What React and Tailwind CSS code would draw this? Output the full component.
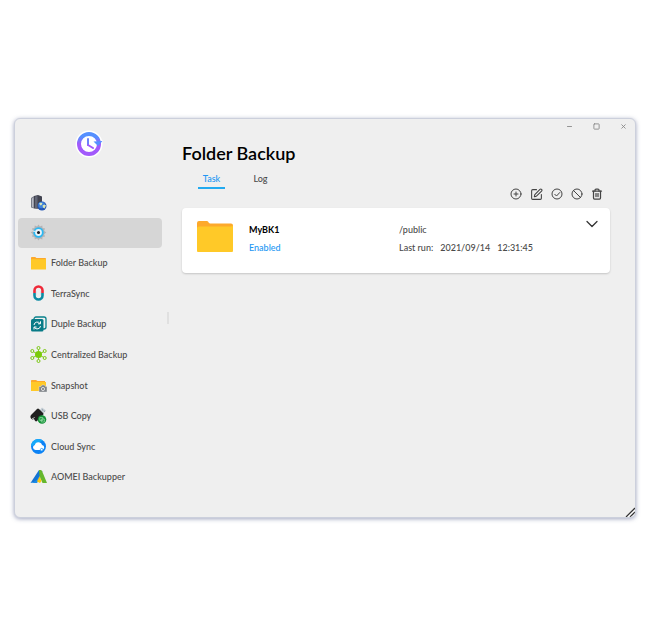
import React, { useState } from 'react';
import { ChevronDown, CirclePlus, Ban, SquarePen, Trash2, Minus, Square, X } from 'lucide-react';

const Logo = () => (
  <svg viewBox="0 0 28 28" className="h-7 w-7" fill="none" aria-label="Backup">
    <defs>
      <linearGradient id="ring" x1="0" y1="0" x2="0" y2="1">
        <stop offset="0.15" stopColor="#5590ff" />
        <stop offset="0.5" stopColor="#a259fb" />
      </linearGradient>
    </defs>
    <circle cx="14" cy="14" r="13.500" fill="#fff" />
    <path d="M20 8l8.500 3-5 6z" fill="#fff" />
    <circle cx="14" cy="14" r="10" stroke="url(#ring)" strokeWidth="4" />
    <path d="M18.500 11.500l9-.6-4.500 5z" fill="#5590ff" />
    <path d="M13 9v6" stroke="#6b83fa" strokeWidth="2" strokeLinecap="round" />
    <path d="M13 15l5 3" stroke="#a259fb" strokeWidth="2" strokeLinecap="round" />
  </svg>
);

const ServerIcon = () => (
  <svg viewBox="0 0 17 17" className="h-[17px] w-[17px]">
    <path d="M1 4l3-2v12.500L1 13.500z" fill="#777b88" />
    <path d="M2 4.500l1.500-1v10L2 13z" fill="#b5b8c2" />
    <path d="M4 2l4-1 4 1.500V15l-8-.5z" fill="#414350" />
    <path d="M5 2.500l2.500-.5v12.500L5 14z" fill="#626676" />
    <circle cx="12" cy="12" r="4.500" fill="#2456b4" />
    <circle cx="11.500" cy="11" r="3.200" fill="#3d82dc" />
    <path d="M9 9.500l2-1 1.500 1-1 1.500-1 .5zM12.500 11.500l2-1 1.500 1-1.500 3-1.500-1z" fill="#dce6b5" />
  </svg>
);

const GearIcon = () => (
  <svg viewBox="0 0 17 17" className="h-[17px] w-[17px]">
    <path
      d="M8.500.5l1.400 2 2.300-1 .4 2.500 2.500.6-1 2.200 2.200 1.700-2.200 1.700 1 2.200-2.500.6-.4 2.500-2.300-1-1.400 2-1.400-2-2.300 1-.4-2.500-2.500-.6 1-2.200L.7 8.500l2.200-1.700-1-2.200 2.500-.6.4-2.500 2.300 1z"
      fill="#b2b3b6"
    />
    <circle cx="8.500" cy="8.500" r="4.300" fill="#eaf4fa" stroke="#2bb8f2" strokeWidth="1.800" />
    <circle cx="8.500" cy="8.500" r="1.500" fill="#171b20" />
    <path d="M2.500 7l3 .5" stroke="#e5e8ea" strokeWidth="1.200" />
  </svg>
);

const FolderIcon = ({ className }) => (
  <svg viewBox="0 0 36 32" className={className} preserveAspectRatio="none">
    <path d="M0 2q0-2 2-2h8q1 0 2 2l1 .5h21q2 0 2 2V14H0z" fill="#fda92b" />
    <path d="M0 7q0-1.500 2-1.500h32q2 0 2-2V30q0 1-1 1H1q-1 0-1-1z" fill="#ffc928" />
  </svg>
);

const TerraIcon = () => (
  <svg viewBox="0 0 17 17" className="h-[17px] w-[17px]" fill="none" strokeWidth="2.600">
    <path d="M4.500 8V5.500a4 4 0 0 1 8 0V8" stroke="#ef2938" />
    <path d="M4.500 8v2.500a4 4 0 0 0 8 0V8" stroke="#0b8ba3" />
    <path d="M6.500 6v4.500M10.500 6v4.500" stroke="#d4e3e7" strokeWidth=".6" />
  </svg>
);

const DupleIcon = () => (
  <svg viewBox="0 0 17 17" className="h-[17px] w-[17px]" fill="none">
    <rect x="4" y="1" width="12" height="12" rx="2" stroke="#08818c" strokeWidth="1.300" />
    <rect x="1" y="3" width="12.500" height="12.500" rx="1.500" fill="#087b87" />
    <path d="M4 9a3.300 3.300 0 0 1 6-1.500M10.500 10a3.300 3.300 0 0 1-6 1.500M10.500 5.300v2.500H8M4 13.500V11h2.500" stroke="#fff" strokeWidth="1" />
  </svg>
);

const CentralIcon = () => (
  <svg viewBox="0 0 17 17" className="h-[17px] w-[17px]" fill="none" stroke="#7bc714">
    <path d="M8.500 3v11M3 5.500l11 6M14 5.500l-11 6" strokeWidth=".9" />
    <circle cx="8.500" cy="8.500" r="3.500" fill="#7bcb0a" stroke="none" />
    <g fill="#efefef" strokeWidth="1">
      <circle cx="8.500" cy="2" r="1.500" />
      <circle cx="8.500" cy="15" r="1.500" />
      <circle cx="2.300" cy="5" r="1.500" />
      <circle cx="14.700" cy="5" r="1.500" />
      <circle cx="2.300" cy="12" r="1.500" />
      <circle cx="14.700" cy="12" r="1.500" />
    </g>
  </svg>
);

const SnapshotIcon = () => (
  <svg viewBox="0 0 17 17" className="h-[17px] w-[17px]">
    <path d="M1 3.500Q1 3 2 3h4l1.500 1H15v4H1z" fill="#fda92b" />
    <path d="M1 5h15v9H1z" fill="#ffc928" />
    <path d="M9 9.500h2l1-1.500h2.500l1 1.500H17V15H9z" fill="#7f8489" stroke="#efefef" strokeWidth=".4" />
    <circle cx="13" cy="12" r="1.600" fill="#7f8489" stroke="#f0f0f0" strokeWidth=".8" />
  </svg>
);

const UsbIcon = () => (
  <svg viewBox="0 0 17 17" className="h-[17px] w-[17px]">
    <path d="M9.500 3.500l2.500-3 4 3-3 3.500z" fill="#c3cdd4" />
    <path d="M12 2.500l.8.600M13.800 3.800l.8.600" stroke="#69737b" strokeWidth=".8" />
    <path d="M1 8l6-6q1-.8 2 0l4 4q1 1 0 2l-6 6q-1 1-2-.3L4 12q-1.500 1-3-.5-1.200-1.700 0-3.500z" fill="#20201f" />
    <path d="M2 11.500q2 .5 2.500-1.500" stroke="#efefef" strokeWidth=".7" fill="none" />
    <circle cx="12" cy="12.500" r="4.300" fill="#159338" />
    <path d="M9.800 10.500h3v3h-3zM11.300 12h3v3h-3z" fill="none" stroke="#9bdcab" strokeWidth=".7" />
  </svg>
);

const CloudIcon = () => (
  <svg viewBox="0 0 17 17" className="h-[17px] w-[17px]">
    <circle cx="8.500" cy="8.500" r="7.500" fill="#0c82f5" />
    <path d="M1 8.500a7.500 7.500 0 0 1 12-6z" fill="#16aafa" />
    <path d="M5.500 12a2.500 2.500 0 0 1-.7-4.900 3.700 3.700 0 0 1 7.200-.2 2.600 2.600 0 0 1 .2 5.100z" fill="#fff" />
    <circle cx="11.700" cy="11.700" r="1.300" fill="#fff" stroke="#1590f3" strokeWidth=".8" />
  </svg>
);

const AomeiIcon = () => (
  <svg viewBox="0 0 17 17" className="h-[17px] w-[17px]">
    <path d="M9 2l3.500 1.500Q9 10 6 13.500L.5 15z" fill="#1474d4" />
    <path d="M.5 15Q6 14 9.500 8l1 2.500L7 15z" fill="#1a8ce8" />
    <path d="M9 2h1.500q1 0 1.500 1l5 12h-4.500L9.500 8z" fill="#65b72c" />
    <path d="M9.500 8.500l2 4.500-1.500 2-3-1.500z" fill="#ffc70c" />
  </svg>
);

const EnableIcon = () => (
  <svg viewBox="0 0 24 24" className="h-3 w-3" fill="none" stroke="currentColor" strokeWidth="2">
    <circle cx="12" cy="12" r="10" />
    <path d="M7 12l4 4 7-7.500" />
  </svg>
);

const navItems = [
  { id: 'server', label: '', title: 'Server', icon: <ServerIcon /> },
  { id: 'settings', label: '', title: 'Settings', icon: <GearIcon /> },
  { id: 'folder-backup', label: 'Folder Backup', icon: <FolderIcon className="h-[13px] w-[15px]" /> },
  { id: 'terrasync', label: 'TerraSync', icon: <TerraIcon /> },
  { id: 'duple-backup', label: 'Duple Backup', icon: <DupleIcon /> },
  { id: 'centralized-backup', label: 'Centralized Backup', icon: <CentralIcon /> },
  { id: 'snapshot', label: 'Snapshot', icon: <SnapshotIcon /> },
  { id: 'usb-copy', label: 'USB Copy', icon: <UsbIcon /> },
  { id: 'cloud-sync', label: 'Cloud Sync', icon: <CloudIcon /> },
  { id: 'aomei-backupper', label: 'AOMEI Backupper', icon: <AomeiIcon /> },
];

const Sidebar = () => {
  const [active, setActive] = useState('settings');

  return (
    <aside className="flex w-[152px] shrink-0 flex-col pt-[11px] pb-[25px]">
      <div className="flex h-7 justify-center pr-1">
        <Logo />
      </div>
      <nav className="mt-[29px] pr-[5px] pl-[3px]">
        <ul className="flex min-h-[305px] flex-col justify-between">
          {navItems.map((item) => (
            <li key={item.id}>
              <a
                href={`#${item.id}`}
                aria-label={item.label || item.title}
                onClick={() => setActive(item.id)}
                className={`flex h-[30px] items-center gap-1 rounded pl-3 text-[#4a4a4a] ${
                  active === item.id ? 'bg-[#d6d6d6]' : 'hover:bg-[#e4e4e4]'
                }`}
              >
                <span className="flex w-[17px] justify-center">{item.icon}</span>
                {item.label}
              </a>
            </li>
          ))}
        </ul>
      </nav>
    </aside>
  );
};

const Toolbar = () => (
  <div className="mt-[18px] flex h-[14px] items-center gap-2 pr-[7px] text-[#444]">
    <button aria-label="Add"><CirclePlus className="h-3 w-3" /></button>
    <button aria-label="Edit"><SquarePen className="h-[13px] w-[13px]" /></button>
    <button aria-label="Enable"><EnableIcon /></button>
    <button aria-label="Disable"><Ban className="h-3 w-3" /></button>
    <button aria-label="Delete"><Trash2 className="h-3 w-3" strokeWidth={2.5} /></button>
  </div>
);

const TaskCard = () => (
  <article className="mt-[7px] flex items-start rounded bg-white pt-1.5 pr-2 pb-4 pl-[15px] shadow-[0_1px_2px_rgba(0,0,0,0.18)]">
    <FolderIcon className="mt-[7px] h-8 w-9 shrink-0" />
    <div className="mt-[7px] ml-4 w-[150px] shrink-0 leading-[18px]">
      <h2 className="font-bold text-black">MyBK1</h2>
      <p className="text-[#2196f3]">Enabled</p>
    </div>
    <div className="mt-[7px] grow leading-[18px] text-[#4a4a4a]">
      <p>/public</p>
      <p className="flex gap-[7px]">
        <span>Last run:</span>
        <span>2021/09/14</span>
        <span>12:31:45</span>
      </p>
    </div>
    <button aria-label="Show details" className="text-[#333]">
      <ChevronDown className="h-5 w-5" strokeWidth={1.5} />
    </button>
  </article>
);

export default function App() {
  const [tab, setTab] = useState('task');

  const tabClass = (name) =>
    `h-5 w-[27px] border-b-2 pt-0.5 text-center ${
      tab === name ? 'border-[#22aaf0] text-[#2196f3]' : 'border-transparent text-[#4a4a4a]'
    }`;

  return (
    <div className="flex min-h-screen items-center bg-white pr-3 pl-[14px] font-['Lato','Liberation_Sans',sans-serif] text-[9px] font-medium">
      <div className="relative flex w-full overflow-hidden rounded-md border border-[#ccd0dc] bg-[#efefef] shadow-[0_1px_4px_rgba(70,80,130,0.5)]">
        <Sidebar />
        <div className="h-3 w-0.5 shrink-0 self-center bg-[#e0e0e0]" />

        <main className="min-w-0 grow pl-[13px]">
          {/* Window controls */}
          <div className="flex h-[15px] items-center justify-end gap-5 pr-2 text-[#888]">
            <button aria-label="Minimize"><Minus className="h-[7px] w-[7px]" strokeWidth={3} /></button>
            <button aria-label="Maximize"><Square className="h-[7px] w-[7px]" strokeWidth={3} /></button>
            <button aria-label="Close"><X className="h-[7px] w-[7px]" strokeWidth={3} /></button>
          </div>

          <div className="pr-[25px]">
            <h1 className="mt-[7px] text-[18px] leading-6 font-semibold text-black">Folder Backup</h1>
            <div className="mt-1 flex items-start justify-between">
              <div role="tablist" className="flex gap-[22px] pl-4">
                <button role="tab" aria-selected={tab === 'task'} onClick={() => setTab('task')} className={tabClass('task')}>
                  Task
                </button>
                <button role="tab" aria-selected={tab === 'log'} onClick={() => setTab('log')} className={tabClass('log')}>
                  Log
                </button>
              </div>
              <Toolbar />
            </div>
            <TaskCard />
          </div>
        </main>

        {/* Resize grip */}
        <svg viewBox="0 0 10 10" className="absolute right-0 bottom-0 h-2.5 w-2.5" stroke="#333" strokeWidth="1.300">
          <path d="M0 10L10 0V10z" fill="#fff" stroke="none" />
          <path d="M1 10l9-9M5 10l5-5" />
        </svg>
      </div>
    </div>
  );
}
